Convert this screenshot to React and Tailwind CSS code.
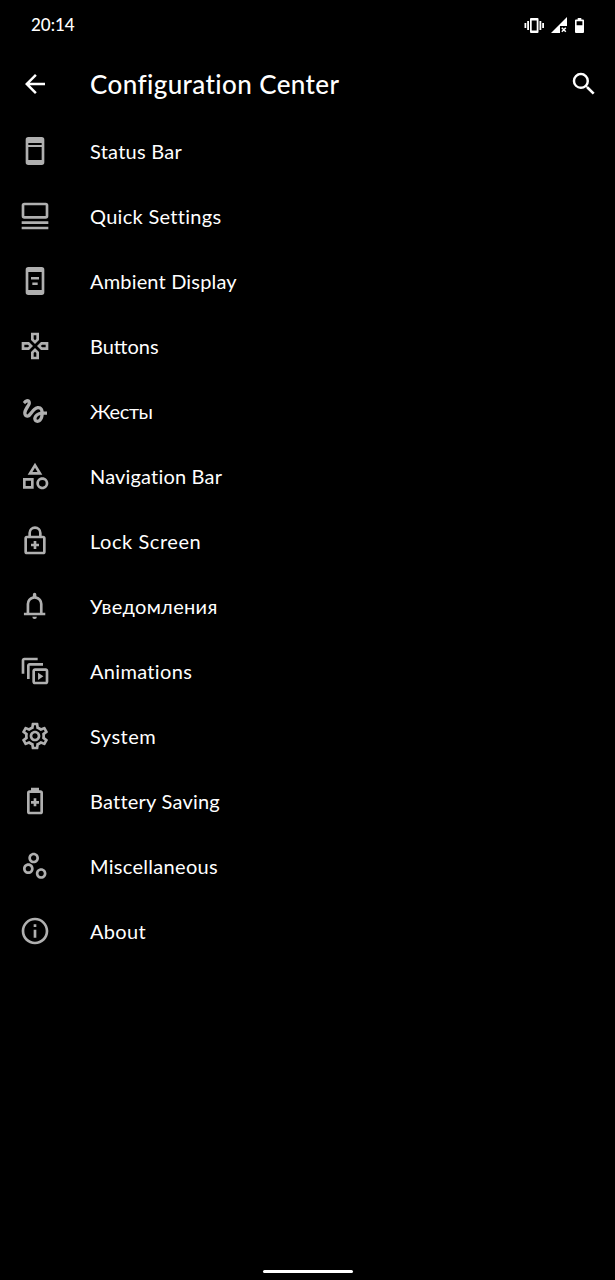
import React from 'react';
import {
  MdArrowBack,
  MdGesture,
  MdOutlineCategory,
  MdOutlineGamepad,
  MdOutlineInfo,
  MdOutlineScatterPlot,
  MdOutlineSettings,
  MdSearch,
} from 'react-icons/md';

const Icon = ({ children }) => (
  <svg viewBox="0 0 24 24" fill="currentColor" fillRule="evenodd" className="w-full h-full">
    {children}
  </svg>
);

const StatusBarIcon = () => (
  <Icon>
    <path d="M7 1.5h10a2 2 0 0 1 2 2v17a2 2 0 0 1-2 2H7a2 2 0 0 1-2-2v-17a2 2 0 0 1 2-2zM7 6v1.5h10V6zM7 9v9.8h10V9z" />
  </Icon>
);

const QuickSettingsIcon = () => (
  <Icon>
    <path d="M4 2h16a2 2 0 0 1 2 2v8a2 2 0 0 1-2 2H4a2 2 0 0 1-2-2V4a2 2 0 0 1 2-2zm0 2v8h16V4zM2 16h20v2H2zM2 20h20v2H2z" />
  </Icon>
);

const AmbientIcon = () => (
  <Icon>
    <path d="M7 1.5h10a2 2 0 0 1 2 2v17a2 2 0 0 1-2 2H7a2 2 0 0 1-2-2v-17a2 2 0 0 1 2-2zM7 5.2v13.6h10V5.2zM9 9h6v1.8H9zM10 13.2h4V15h-4z" />
  </Icon>
);

const LockIcon = () => (
  <Icon>
    <path d="M18 8h-1V6A5 5 0 0 0 7 6v2H6a2 2 0 0 0-2 2v10a2 2 0 0 0 2 2h12a2 2 0 0 0 2-2V10a2 2 0 0 0-2-2zM9 6a3 3 0 0 1 6 0v2H9zM6 10h12v10H6zM11 12v2H9v2h2v2h2v-2h2v-2h-2v-2z" />
  </Icon>
);

const BellIcon = () => (
  <Icon>
    <path d="M3.7 17h2v-6.5a6 6 0 0 1 4.7-5.9V3.300a1.300 1.300 0 0 1 2.600 0v1.300a6 6 0 0 1 4.700 5.900V17h2v2h-16zM7.700 17h8v-6.500a4 4 0 0 0-8 0zM10 20h3.400a1.700 1.700 0 0 1-3.400 0z" />
  </Icon>
);

const AnimationsIcon = () => (
  <Icon>
    <path d="M14 2H4c-1.100 0-2 .9-2 2v10h2V4h10V2zm4 4H8c-1.100 0-2 .9-2 2v10h2V8h10V6zm2 4h-8c-1.100 0-2 .9-2 2v8c0 1.100.9 2 2 2h8c1.100 0 2-.9 2-2v-8c0-1.100-.9-2-2-2zm0 10h-8v-8h8v8zM14.300 13.300v5.400L18.300 16z" />
  </Icon>
);

const BatterySavingIcon = () => (
  <Icon>
    <path d="M9 2h6v2h1a2 2 0 0 1 2 2v14a2 2 0 0 1-2 2H8a2 2 0 0 1-2-2V6a2 2 0 0 1 2-2h1zM8 6v14h8V6zM11 10h2v2h2v2h-2v2h-2v-2H9v-2h2z" />
  </Icon>
);

const items = [
  { label: 'Status Bar', icon: StatusBarIcon, tracking: 'tracking-[0.25px]' },
  { label: 'Quick Settings', icon: QuickSettingsIcon, tracking: 'tracking-[0.3px]' },
  { label: 'Ambient Display', icon: AmbientIcon, tracking: 'tracking-[0.17px]' },
  { label: 'Buttons', icon: MdOutlineGamepad, tracking: 'tracking-normal' },
  { label: 'Жесты', icon: MdGesture, tracking: 'tracking-[-0.4px]' },
  { label: 'Navigation Bar', icon: MdOutlineCategory, tracking: 'tracking-[0.18px]' },
  { label: 'Lock Screen', icon: LockIcon, tracking: 'tracking-[0.55px]' },
  { label: 'Уведомления', icon: BellIcon, tracking: 'tracking-[0.32px]' },
  { label: 'Animations', icon: AnimationsIcon, tracking: 'tracking-[0.33px]' },
  { label: 'System', icon: MdOutlineSettings, tracking: 'tracking-[0.5px]' },
  { label: 'Battery Saving', icon: BatterySavingIcon, tracking: 'tracking-[0.23px]' },
  { label: 'Miscellaneous', icon: MdOutlineScatterPlot, tracking: 'tracking-[0.3px]' },
  { label: 'About', icon: MdOutlineInfo, tracking: 'tracking-[0.3px]' },
];

const StatusBar = () => (
  <div className="flex items-center justify-between h-[50px] pl-[31px] pr-[31px]">
    <span className="text-[17px] font-medium">20:14</span>
    <div className="flex items-center">
      {/* Vibrate */}
      <svg width="20" height="15" viewBox="0 0 20 15" fill="currentColor">
        <path fillRule="evenodd" d="M7 0h6.500a1 1 0 0 1 1 1v13a1 1 0 0 1-1 1H7a1 1 0 0 1-1-1V1a1 1 0 0 1 1-1zm.7 2.500v10h5v-10z" />
        <path d="M.5 5h1.800v5H.5zM3.200 3H5v9H3.200zM15.500 3h1.800v9h-1.800zM18.200 5H20v5h-1.800z" />
      </svg>
      {/* Mobile signal without data */}
      <svg width="16" height="16" viewBox="0 0 16 16" fill="currentColor" className="ml-[7px]">
        <path d="M0 16L16 0v9H9v7z" />
        <path d="M10.800 10.800l4 4m0-4l-4 4" stroke="currentColor" strokeWidth="1.500" />
      </svg>
      {/* Battery */}
      <svg width="9" height="15" viewBox="0 0 9 15" fill="currentColor" className="ml-2">
        <path fillRule="evenodd" d="M2.700 0h3.600v1.500H8a1 1 0 0 1 1 1V14a1 1 0 0 1-1 1H1a1 1 0 0 1-1-1V2.500a1 1 0 0 1 1-1h1.700zM1.600 3.200v4h5.800v-4z" />
      </svg>
    </div>
  </div>
);

const App = () => {
  return (
    <div className="flex flex-col w-full h-screen bg-black text-white font-['Lato','Noto_Sans',sans-serif] overflow-hidden">
      <StatusBar />

      {/* Header */}
      <header className="flex items-center h-[68px] pl-5 pr-4">
        <MdArrowBack size={30} />
        <h1 className="ml-10 flex-1 text-[26px] font-medium leading-8 tracking-[0.4px] whitespace-nowrap">
          Configuration Center
        </h1>
        <MdSearch size={30} />
      </header>

      {/* Settings list */}
      <ul className="flex flex-col">
        {items.map(({ label, icon: ItemIcon, tracking }) => (
          <li key={label} className="flex items-center h-[65px] pl-[19px]">
            <span className="flex w-8 h-8 mt-px text-[#b0b0b0]">
              <ItemIcon className="w-full h-full" />
            </span>
            <span className={`ml-[39px] text-[20px] leading-6 whitespace-nowrap ${tracking}`}>{label}</span>
          </li>
        ))}
      </ul>

      {/* Gesture handle */}
      <div className="mt-auto flex justify-center pb-[7px]">
        <div className="w-[90px] h-[3px] rounded-full bg-white" />
      </div>
    </div>
  );
};

export default App;
